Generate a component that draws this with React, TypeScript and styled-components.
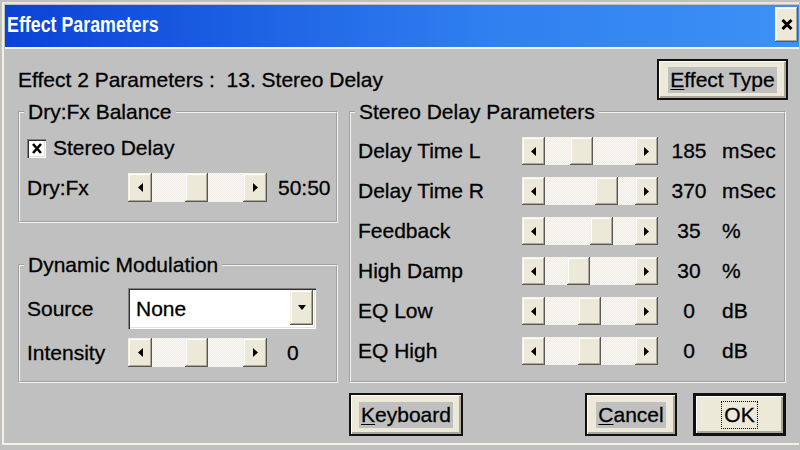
import React from "react";
import styled, { createGlobalStyle } from "styled-components";

const GlobalStyle = createGlobalStyle`
  html, body { margin: 0; padding: 0; background: #c0c0c0; }
  body {
    font-family: "Liberation Sans", Arial, sans-serif;
    font-size: 21px;
    color: #000;
    -webkit-text-stroke: 0.3px #000;
  }
  * { box-sizing: border-box; }
`;

const FACE = "#ece9d8";
const GRAY = "#c0c0c0";

const raised = `
  box-shadow:
    inset -1px -1px 0 #5a584f,
    inset 1px 1px 0 #f4f2e8,
    inset -2px -2px 0 #aca899,
    inset 2px 2px 0 #ffffff;
`;

const sunken = `
  box-shadow:
    inset 1px 1px 0 #808080,
    inset 2px 2px 0 #303030,
    inset -1px -1px 0 #ffffff,
    inset -2px -2px 0 #e4e2d8;
`;

const Window = styled.div`
  width: 800px;
  height: 450px;
  background: ${GRAY};
  padding: 2px 1px 5px 2px;
  display: flex;
`;

const Frame = styled.div`
  flex: 1;
  display: flex;
  flex-direction: column;
  border-left: 2px solid #f4f1e3;
  border-top: 2px solid #e8e6dc;
  border-bottom: 2px solid #f4f1e3;
  padding: 1px 0 0 1px;
`;

const TitleBar = styled.div`
  height: 44px;
  flex: none;
  display: flex;
  align-items: center;
  justify-content: space-between;
  padding: 0 0 2px 2px;
  background: linear-gradient(90deg, #0a42d6 0%, #2f7ff0 60%, #3d91f4 100%);
  border-bottom: 2px solid #f2f2f2;
`;

const TitleText = styled.div`
  font-family: "Liberation Sans", Arial, sans-serif;
  font-weight: bold;
  font-size: 22px;
  color: #fff;
  -webkit-text-stroke: 0;
  line-height: 24px;
  transform: scaleX(0.81);
  transform-origin: left center;
`;

const CloseButton = styled.div`
  width: 23px;
  height: 35px;
  margin: 0 1px 1px 0;
  background: ${FACE};
  ${raised}
  display: flex;
  align-items: center;
  justify-content: center;
`;

const Body = styled.div`
  flex: 1;
  display: flex;
  flex-direction: column;
  padding: 10px 11px 0 13px;
`;

const Header = styled.div`
  height: 41px;
  display: flex;
  align-items: center;
  justify-content: space-between;
`;

const Heading = styled.div`
  white-space: pre;
  line-height: 24px;
  padding-top: 1px;
`;

const MainGrid = styled.div`
  height: 283px;
  display: grid;
  grid-template-columns: 320px 437px;
  column-gap: 11px;
`;

const LeftColumn = styled.div`
  display: flex;
  flex-direction: column;
  gap: 30px;
`;

const Group = styled.fieldset<{ $pt: number; $pb: number }>`
  margin: 0;
  min-width: 0;
  border: 2px groove #f4f4f4;
  padding: ${(p) => p.$pt}px 7px ${(p) => p.$pb}px 7px;
  display: flex;
  flex-direction: column;
`;

const Legend = styled.legend`
  padding: 0 4px;
  margin-left: -3px;
  line-height: 24px;
  height: 24px;
`;

const CheckRow = styled.div`
  height: 28px;
  display: flex;
  align-items: center;
  gap: 7px;
`;

const CheckBox = styled.div`
  width: 19px;
  height: 19px;
  background: #fff;
  ${sunken}
  display: flex;
  align-items: center;
  justify-content: center;
`;

const LeftRow = styled.div<{ $h: number; $mt: number }>`
  height: ${(p) => p.$h}px;
  margin-top: ${(p) => p.$mt}px;
  display: grid;
  grid-template-columns: 101px auto 1fr;
  align-items: center;
`;

const Label = styled.div`
  line-height: 24px;
  white-space: nowrap;
`;

const Value = styled.div<{ $indent: number }>`
  padding-left: ${(p) => p.$indent}px;
  line-height: 24px;
  white-space: nowrap;
`;

const ParamList = styled.div`
  display: flex;
  flex-direction: column;
  gap: 12px;
`;

const ParamRow = styled.div`
  height: 28px;
  display: grid;
  grid-template-columns: 164px 136px 62px 1fr;
  align-items: center;
`;

const ParamValue = styled.div`
  text-align: center;
  line-height: 24px;
`;

const Unit = styled.div`
  padding-left: 2px;
  line-height: 24px;
`;

const SliderBox = styled.div<{ $w: number; $h: number }>`
  width: ${(p) => p.$w}px;
  height: ${(p) => p.$h}px;
  display: flex;
`;

const ArrowButton = styled.div<{ $w: number }>`
  width: ${(p) => p.$w}px;
  flex: none;
  background: ${FACE};
  ${raised}
  display: flex;
  align-items: center;
  justify-content: center;
`;

const Track = styled.div`
  flex: 1;
  display: flex;
  background-color: #fbfaf6;
  background-image: repeating-conic-gradient(#eeece2 0 25%, #fbfaf6 0 50%);
  background-size: 2px 2px;
`;

const TrackSpace = styled.div`
  flex: none;
`;

const Thumb = styled.div`
  width: 23px;
  flex: none;
  background: ${FACE};
  ${raised}
`;

const Combo = styled.div`
  width: 188px;
  height: 41px;
  background: #fff;
  ${sunken}
  padding: 2px 3px 4px 2px;
  display: flex;
  align-items: stretch;
`;

const ComboText = styled.div`
  flex: 1;
  display: flex;
  align-items: center;
  padding-left: 6px;
  padding-top: 2px;
`;

const ComboButton = styled.div`
  width: 23px;
  flex: none;
  background: ${FACE};
  ${raised}
  display: flex;
  align-items: center;
  justify-content: center;
`;

const Footer = styled.div`
  margin-top: 10px;
  height: 43px;
  display: grid;
  grid-template-columns: 320px 437px;
  column-gap: 11px;
`;

const FooterRight = styled.div`
  display: flex;
  gap: 16px;
`;

const Spacer = styled.div`
  flex: 1;
`;

const PushButton = styled.div<{ $w: number; $h: number; $default?: boolean }>`
  width: ${(p) => p.$w}px;
  height: ${(p) => p.$h}px;
  flex: none;
  background: ${FACE};
  border: ${(p) => (p.$default ? 3 : 2)}px solid #111;
  box-shadow:
    inset 1px 1px 0 #ffffff,
    inset -2px -2px 0 #aca899;
  display: flex;
  align-items: center;
  justify-content: center;
`;

const ButtonLabel = styled.span<{ $focus?: boolean }>`
  line-height: 26px;
  padding: 0 2px;
  background: ${(p) => (p.$focus ? "transparent" : GRAY)};
  outline: ${(p) => (p.$focus ? "1px dotted #000" : "none")};
  u {
    text-decoration-thickness: 1px;
    text-underline-offset: 2px;
  }
`;

const LeftArrow = () => (
  <svg width="5" height="9" viewBox="0 0 5 9">
    <polygon points="5,0 0,4.5 5,9" fill="#000" />
  </svg>
);

const RightArrow = () => (
  <svg width="5" height="9" viewBox="0 0 5 9">
    <polygon points="0,0 5,4.5 0,9" fill="#000" />
  </svg>
);

const DownArrow = () => (
  <svg width="8" height="5" viewBox="0 0 8 5">
    <polygon points="0,0 8,0 4,5" fill="#000" />
  </svg>
);

const CheckMark = () => (
  <svg width="10" height="11" viewBox="0 0 10 11">
    <path d="M1 1 L9 10 M9 1 L1 10" stroke="#000" strokeWidth="2.6" />
  </svg>
);

const CloseGlyph = () => (
  <svg width="12" height="11" viewBox="0 0 12 11">
    <path d="M1.5 1 L10.5 10 M10.5 1 L1.5 10" stroke="#000" strokeWidth="3" />
  </svg>
);

type SliderProps = { width: number; height: number; btn: number; pos: number };

const Slider = ({ width, height, btn, pos }: SliderProps) => (
  <SliderBox $w={width} $h={height}>
    <ArrowButton $w={btn}>
      <LeftArrow />
    </ArrowButton>
    <Track>
      <TrackSpace style={{ width: pos }} />
      <Thumb />
    </Track>
    <ArrowButton $w={btn}>
      <RightArrow />
    </ArrowButton>
  </SliderBox>
);

const delayParams = [
  { label: "Delay Time L", pos: 25, value: "185", unit: "mSec" },
  { label: "Delay Time R", pos: 50, value: "370", unit: "mSec" },
  { label: "Feedback", pos: 45, value: "35", unit: "%" },
  { label: "High Damp", pos: 22, value: "30", unit: "%" },
  { label: "EQ Low", pos: 33, value: "0", unit: "dB" },
  { label: "EQ High", pos: 33, value: "0", unit: "dB" },
];

export default function App() {
  return (
    <>
      <GlobalStyle />
      <Window>
        <Frame>
          <TitleBar>
            <TitleText>Effect Parameters</TitleText>
            <CloseButton>
              <CloseGlyph />
            </CloseButton>
          </TitleBar>
          <Body>
            <Header>
              <Heading>{"Effect 2 Parameters :  13. Stereo Delay"}</Heading>
              <PushButton $w={131} $h={41}>
                <ButtonLabel>
                  <u>E</u>ffect Type
                </ButtonLabel>
              </PushButton>
            </Header>
            <MainGrid>
              <LeftColumn>
                <Group $pt={10} $pb={19}>
                  <Legend>Dry:Fx Balance</Legend>
                  <CheckRow>
                    <CheckBox>
                      <CheckMark />
                    </CheckBox>
                    <Label>Stereo Delay</Label>
                  </CheckRow>
                  <LeftRow $h={29} $mt={11}>
                    <Label>Dry:Fx</Label>
                    <Slider width={139} height={29} btn={24} pos={33} />
                    <Value $indent={11}>50:50</Value>
                  </LeftRow>
                </Group>
                <Group $pt={11} $pb={14}>
                  <Legend>Dynamic Modulation</Legend>
                  <LeftRow $h={41} $mt={0}>
                    <Label>Source</Label>
                    <Combo>
                      <ComboText>None</ComboText>
                      <ComboButton>
                        <DownArrow />
                      </ComboButton>
                    </Combo>
                  </LeftRow>
                  <LeftRow $h={29} $mt={9}>
                    <Label>Intensity</Label>
                    <Slider width={139} height={29} btn={24} pos={33} />
                    <Value $indent={20}>0</Value>
                  </LeftRow>
                </Group>
              </LeftColumn>
              <Group $pt={13} $pb={14}>
                <Legend>Stereo Delay Parameters</Legend>
                <ParamList>
                  {delayParams.map((p) => (
                    <ParamRow key={p.label}>
                      <Label>{p.label}</Label>
                      <Slider width={136} height={28} btn={23} pos={p.pos} />
                      <ParamValue>{p.value}</ParamValue>
                      <Unit>{p.unit}</Unit>
                    </ParamRow>
                  ))}
                </ParamList>
              </Group>
            </MainGrid>
            <Footer>
              <div />
              <FooterRight>
                <PushButton $w={114} $h={43}>
                  <ButtonLabel>
                    <u>K</u>eyboard
                  </ButtonLabel>
                </PushButton>
                <Spacer />
                <PushButton $w={92} $h={43}>
                  <ButtonLabel>
                    <u>C</u>ancel
                  </ButtonLabel>
                </PushButton>
                <PushButton $w={93} $h={43} $default>
                  <ButtonLabel $focus>OK</ButtonLabel>
                </PushButton>
              </FooterRight>
            </Footer>
          </Body>
        </Frame>
      </Window>
    </>
  );
}
